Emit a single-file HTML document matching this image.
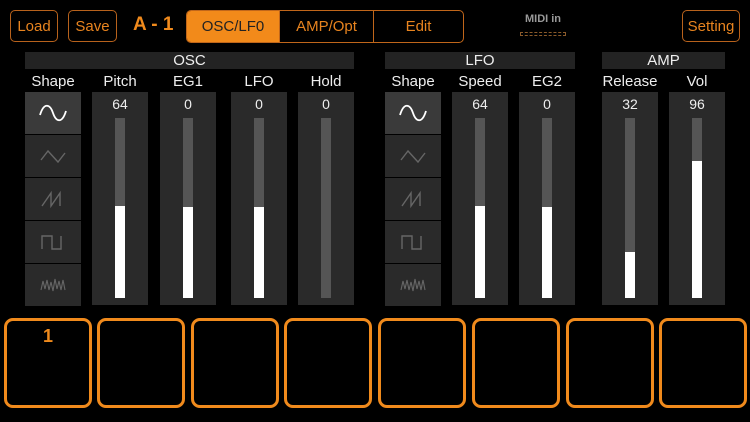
<!DOCTYPE html><html><head><style>
body{margin:0;width:750px;height:422px;background:#000;position:relative;overflow:hidden;font-family:"Liberation Sans","DejaVu Sans",sans-serif;}
.a{position:absolute;box-sizing:border-box}
.btn{border:1.5px solid #b8621c;border-radius:5px;color:#e8841f;font-size:15px;display:flex;align-items:center;justify-content:center}
.hdr{background:#232323;color:#eee;font-size:15px;text-align:center;line-height:17px;height:17px;top:52px}
.lbl{color:#eee;font-size:15px;text-align:center;top:73px;width:70px}
.col{background:#2a2a2a;top:92px;height:213px;width:56px}
.val{color:#eee;font-size:14px;text-align:center;width:56px;top:96px}
.trk{background:#555;width:10px;top:118px;height:180px}
.fill{background:#fff;width:10px;bottom:124px}
.sh{background:#2a2a2a;width:56px;height:42px;display:flex;align-items:center;justify-content:center}
.pad{border:3px solid #f08a1c;border-radius:9px;top:318px;height:90px;width:88px}
</style></head><body>
<div class="a btn" style="left:10px;top:10px;width:48px;height:32px">Load</div>
<div class="a btn" style="left:68px;top:10px;width:49px;height:32px">Save</div>
<div class="a" style="left:133px;top:14px;color:#f08a1c;font-size:19px;font-weight:bold">A - 1</div>
<div class="a" style="left:186px;top:10px;width:278px;height:33px;border:1.5px solid #c0661a;border-radius:5px;overflow:hidden;display:flex;font-size:15px">
<div style="width:92px;background:#f28a1a;color:#222;display:flex;align-items:center;justify-content:center">OSC/LF0</div>
<div style="width:93px;border-left:1.5px solid #c0661a;border-right:1.5px solid #c0661a;color:#e8841f;display:flex;align-items:center;justify-content:center">AMP/Opt</div>
<div style="flex:1;color:#e8841f;display:flex;align-items:center;justify-content:center">Edit</div></div>
<div class="a" style="left:518px;top:13px;width:50px;text-align:center;color:#999;font-size:11px;font-weight:bold">MIDI in</div>
<div class="a" style="left:520px;top:32px;width:46px;height:4px;border:1px dashed #8a5a2a"></div>
<div class="a btn" style="left:682px;top:10px;width:58px;height:32px">Setting</div>

<div class="a hdr" style="left:25px;width:329px">OSC</div>
<div class="a hdr" style="left:385px;width:190px">LFO</div>
<div class="a hdr" style="left:602px;width:123px">AMP</div>

<div class="a lbl" style="left:18px">Shape</div>
<div class="a lbl" style="left:85px">Pitch</div>
<div class="a lbl" style="left:153px">EG1</div>
<div class="a lbl" style="left:224px">LFO</div>
<div class="a lbl" style="left:291px">Hold</div>
<div class="a lbl" style="left:378px">Shape</div>
<div class="a lbl" style="left:445px">Speed</div>
<div class="a lbl" style="left:512px">EG2</div>
<div class="a lbl" style="left:595px">Release</div>
<div class="a lbl" style="left:662px">Vol</div>

<div class="a" style="left:25px;top:92px;display:flex;flex-direction:column;gap:1px">
<div class="sh" style="background:#3a3a3a"><svg width="30" height="22"><path d="M2 13C6 0 12 2 15 11S24 22 28 9" stroke="#fff" stroke-width="1.8" fill="none"/></svg></div>
<div class="sh"><svg width="30" height="22"><path d="M3 15L10 6L20 17L27 8" stroke="#666" stroke-width="1.4" fill="none"/></svg></div>
<div class="sh"><svg width="30" height="22"><path d="M4 18L13 5V18L22 5V18" stroke="#666" stroke-width="1.4" fill="none"/></svg></div>
<div class="sh"><svg width="30" height="22"><path d="M4 18V5H14V18H23V5" stroke="#666" stroke-width="1.4" fill="none"/></svg></div>
<div class="sh"><svg width="30" height="22"><path d="M3 16L5 7L7 15L9 6L11 16L13 8L15 17L17 5L19 15L21 7L23 16L25 6L27 16" stroke="#666" stroke-width="1.1" fill="none"/></svg></div>
</div>
<div class="a" style="left:385px;top:92px;display:flex;flex-direction:column;gap:1px">
<div class="sh" style="background:#3a3a3a"><svg width="30" height="22"><path d="M2 13C6 0 12 2 15 11S24 22 28 9" stroke="#fff" stroke-width="1.8" fill="none"/></svg></div>
<div class="sh"><svg width="30" height="22"><path d="M3 15L10 6L20 17L27 8" stroke="#666" stroke-width="1.4" fill="none"/></svg></div>
<div class="sh"><svg width="30" height="22"><path d="M4 18L13 5V18L22 5V18" stroke="#666" stroke-width="1.4" fill="none"/></svg></div>
<div class="sh"><svg width="30" height="22"><path d="M4 18V5H14V18H23V5" stroke="#666" stroke-width="1.4" fill="none"/></svg></div>
<div class="sh"><svg width="30" height="22"><path d="M3 16L5 7L7 15L9 6L11 16L13 8L15 17L17 5L19 15L21 7L23 16L25 6L27 16" stroke="#666" stroke-width="1.1" fill="none"/></svg></div>
</div>

<div class="a col" style="left:92px"></div><div class="a val" style="left:92px">64</div><div class="a trk" style="left:115px"></div><div class="a fill" style="left:115px;top:206px"></div>
<div class="a col" style="left:160px"></div><div class="a val" style="left:160px">0</div><div class="a trk" style="left:183px"></div><div class="a fill" style="left:183px;top:207px"></div>
<div class="a col" style="left:231px"></div><div class="a val" style="left:231px">0</div><div class="a trk" style="left:254px"></div><div class="a fill" style="left:254px;top:207px"></div>
<div class="a col" style="left:298px"></div><div class="a val" style="left:298px">0</div><div class="a trk" style="left:321px"></div>
<div class="a col" style="left:452px"></div><div class="a val" style="left:452px">64</div><div class="a trk" style="left:475px"></div><div class="a fill" style="left:475px;top:206px"></div>
<div class="a col" style="left:519px"></div><div class="a val" style="left:519px">0</div><div class="a trk" style="left:542px"></div><div class="a fill" style="left:542px;top:207px"></div>
<div class="a col" style="left:602px"></div><div class="a val" style="left:602px">32</div><div class="a trk" style="left:625px"></div><div class="a fill" style="left:625px;top:252px"></div>
<div class="a col" style="left:669px"></div><div class="a val" style="left:669px">96</div><div class="a trk" style="left:692px"></div><div class="a fill" style="left:692px;top:161px"></div>

<div class="a pad" style="left:4px"><div style="color:#f08a1c;font-size:18px;font-weight:bold;text-align:center;margin-top:5px">1</div></div>
<div class="a pad" style="left:97px"></div>
<div class="a pad" style="left:191px"></div>
<div class="a pad" style="left:284px"></div>
<div class="a pad" style="left:378px"></div>
<div class="a pad" style="left:472px"></div>
<div class="a pad" style="left:566px"></div>
<div class="a pad" style="left:659px"></div>
</body></html>
